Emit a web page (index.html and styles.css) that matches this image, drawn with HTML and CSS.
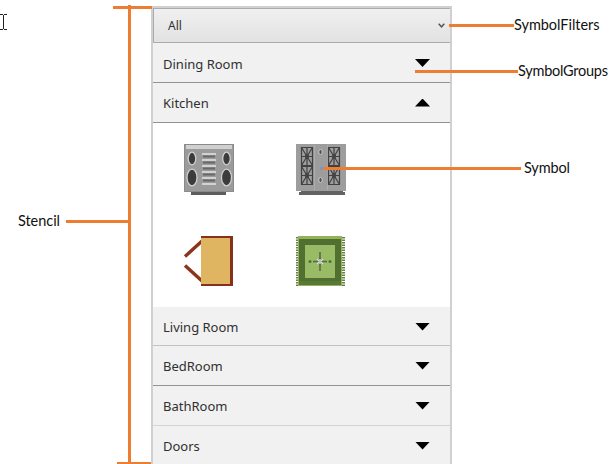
FILE: index.html
```html
<!DOCTYPE html>
<html lang="en">
<head>
<meta charset="utf-8">
<title>Stencil</title>
<link rel="stylesheet" href="styles.css">
</head>
<body>
<main class="stencil">
  <div class="filter"><span>All</span>
    <svg class="chevron" width="7" height="5" viewBox="0 0 7 5"><path d="M.7 .8 3.5 3.8 6.3 .8" fill="none" stroke="#555" stroke-width="1.5"/></svg>
  </div>
  <div class="group first"><span>Dining Room</span><i class="arrow"></i></div>
  <div class="group"><span>Kitchen</span><i class="arrow up"></i></div>
  <div class="symbols">
    <svg viewBox="0 0 54 54">
      <path d="M9 50h35v3H9z" fill="#5d5d5d"/>
      <path d="M2 2h50v48H2z" fill="#9b9b9b"/>
      <path d="M2.5 2.5h49v47h-49z" fill="none" stroke="#8b8b8b"/>
      <path d="M4 3h46v4H4z" fill="#d0d0d0"/>
      <path d="M20 12h14M20 18h14M20 24h14M20 30h14M20 36h14M20 42h14" stroke="#d2d2d2" stroke-width="2"/>
      <path d="M21 14.500h12M21 20.500h12M21 26.500h12M21 32.500h12M21 38.500h12" stroke="#696969" stroke-width="2"/>
      <g fill="#3c3c3c" stroke="#d0d0d0" stroke-width="1.300">
        <ellipse cx="10" cy="16.500" rx="3.800" ry="6.300"/><ellipse cx="44.500" cy="16.500" rx="3.800" ry="6.300"/>
        <ellipse cx="10" cy="35.500" rx="5" ry="8.300"/><ellipse cx="44.500" cy="35.500" rx="5" ry="8.300"/>
      </g>
    </svg>
    <svg viewBox="0 0 54 54">
      <path d="M7 48h42v2h2v3H5v-3h2z" fill="#626262"/>
      <path d="M2 2h50v47H2z" fill="#9d9d9d"/>
      <path d="M20.500 3v45M33.500 3v45" stroke="#adadad"/>
      <g fill="none" stroke="#414141" stroke-width="1.200">
        <path id="burner" d="M7.500 5.500h11v18h-11zM7.500 5.500l11 18M18.500 5.500l-11 18M13 5.500v18M7.500 14.500h11"/>
        <use href="#burner" y="19"/><use href="#burner" x="27"/><use href="#burner" x="27" y="19"/>
      </g>
      <g fill="#444"><circle cx="13" cy="14.500" r="2.200"/><circle cx="13" cy="33.500" r="2.200"/><circle cx="40" cy="14.500" r="2.200"/><circle cx="40" cy="33.500" r="2.200"/></g>
      <g fill="#555" stroke="#ccc"><ellipse cx="26.500" cy="10" rx="1.800" ry="2.500"/><ellipse cx="26.500" cy="38" rx="1.800" ry="2.500"/></g>
      <path d="M26 25h3v3h-3z" fill="#7799c7"/>
    </svg>
    <svg viewBox="0 0 54 54">
      <path d="M3 22.500 20 7M3 31.500 20 47" fill="none" stroke="#8b351d" stroke-width="3.400"/>
      <path d="M19 2h32v50H19z" fill="#86301d"/>
      <path d="M19 4h29v46H19z" fill="#dfb562"/>
    </svg>
    <svg viewBox="0 0 54 54">
      <path d="M3.500 3v49M49.500 3v49" stroke="#658146" stroke-width="3" stroke-dasharray="1.500 1"/>
      <path d="M4 2h44v50H4z" fill="#93b35b"/>
      <path d="M5 5h42v42H5z" fill="#516f31"/>
      <path d="M5 47h42v4H5z" fill="#587835"/>
      <path d="M11 11h30v33H11z" fill="#9abb66"/>
      <g transform="translate(-1)">
        <path d="M27 18v19M20 27.500h14" stroke="#526a44" stroke-width="1.500"/>
        <path d="m27 22 1.500 4 4 1.500-4 1.500-1.500 4-1.500-4-4-1.500 4-1.500z" fill="#61705a"/>
        <path d="m24 25 2 2M30 25l-2 2M24 30l2-2M30 30l-2-2M27 25v5" stroke="#dce2cf" stroke-width="1.200"/>
        <circle cx="17" cy="27.500" r="1.500" fill="#506d3c"/><circle cx="37" cy="27.500" r="1.500" fill="#506d3c"/>
      </g>
    </svg>
  </div>
  <div class="group soft"><span>Living Room</span><i class="arrow"></i></div>
  <div class="group"><span>BedRoom</span><i class="arrow"></i></div>
  <div class="group faint"><span>BathRoom</span><i class="arrow"></i></div>
  <div class="group"><span>Doors</span><i class="arrow"></i></div>
</main>
<svg class="callouts" width="611" height="464" viewBox="0 0 611 464">
  <g fill="none" stroke="#ed7d31" stroke-width="3">
    <path d="M113 7.500h39M129.500 5v459M117 463.500h34M66 221.500h63M449 25.500h65M415 71.500h103M323 168.500h198"/>
  </g>
  <path d="M0 14.500h3M4 14.500h3M0 29.500h3M4 29.500h3M3.500 15v14" stroke="#222" fill="none"/>
  <g class="labels">
    <text x="18" y="226" textLength="42">Stencil</text>
    <text x="514" y="30" textLength="85.500">SymbolFilters</text>
    <text x="518" y="76" textLength="90">SymbolGroups</text>
    <text x="524" y="173" textLength="46">Symbol</text>
  </g>
</svg>
</body>
</html>
```

FILE: styles.css
```css
* { box-sizing: border-box; }
body {
  position: relative;
  margin: 0;
  height: 464px;
  overflow: hidden;
  background: #fff;
  font-family: "Noto Sans", sans-serif;
  color: #303030;
}
.stencil {
  width: 301px;
  height: 464px;
  margin-left: 151px;
  padding-top: 6px;
  overflow: hidden;
  position: relative;
}
.stencil::before {
  content: "";
  position: absolute;
  inset: 6px 0 0;
  border: 2px solid #d0d0d0;
  border-bottom: 0;
}
.filter {
  display: flex;
  align-items: center;
  justify-content: space-between;
  height: 35px;
  margin: 2px 1px 0 2px;
  padding: 0 5px 0 14px;
  border: 1px solid #a9abae;
  background: linear-gradient(#f0f0f0, #e2e2e2);
  font-size: 12px;
}
.group {
  display: flex;
  align-items: center;
  justify-content: space-between;
  height: 40px;
  margin: 0 2px;
  padding: 1px 20px 0 10px;
  border-bottom: 1px solid #929292;
  background: #f1f1f1;
  font-size: 13px;
}
.group.first { padding-top: 2px; }
.group.soft { height: 39px; padding-top: 2px; border-color: #c2c2c2; }
.group.faint { border-color: #d4d4d4; }
.arrow {
  width: 15px;
  height: 8px;
  margin-bottom: 1px;
  background: #000;
  clip-path: polygon(0 0, 100% 0, 50% 100%);
}
.arrow.up { clip-path: polygon(50% 0, 100% 100%, 0 100%); }
.symbols {
  display: grid;
  grid-template-columns: 54px 54px;
  grid-template-rows: 54px 54px;
  gap: 38px 58px;
  height: 184px;
  padding: 19px 0 0 31px;
}
.symbols svg { width: 54px; height: 54px; }
.callouts { position: absolute; inset: 0; }
.labels {
  font: 14.5px Lato, sans-serif;
  fill: #111;
}
```
